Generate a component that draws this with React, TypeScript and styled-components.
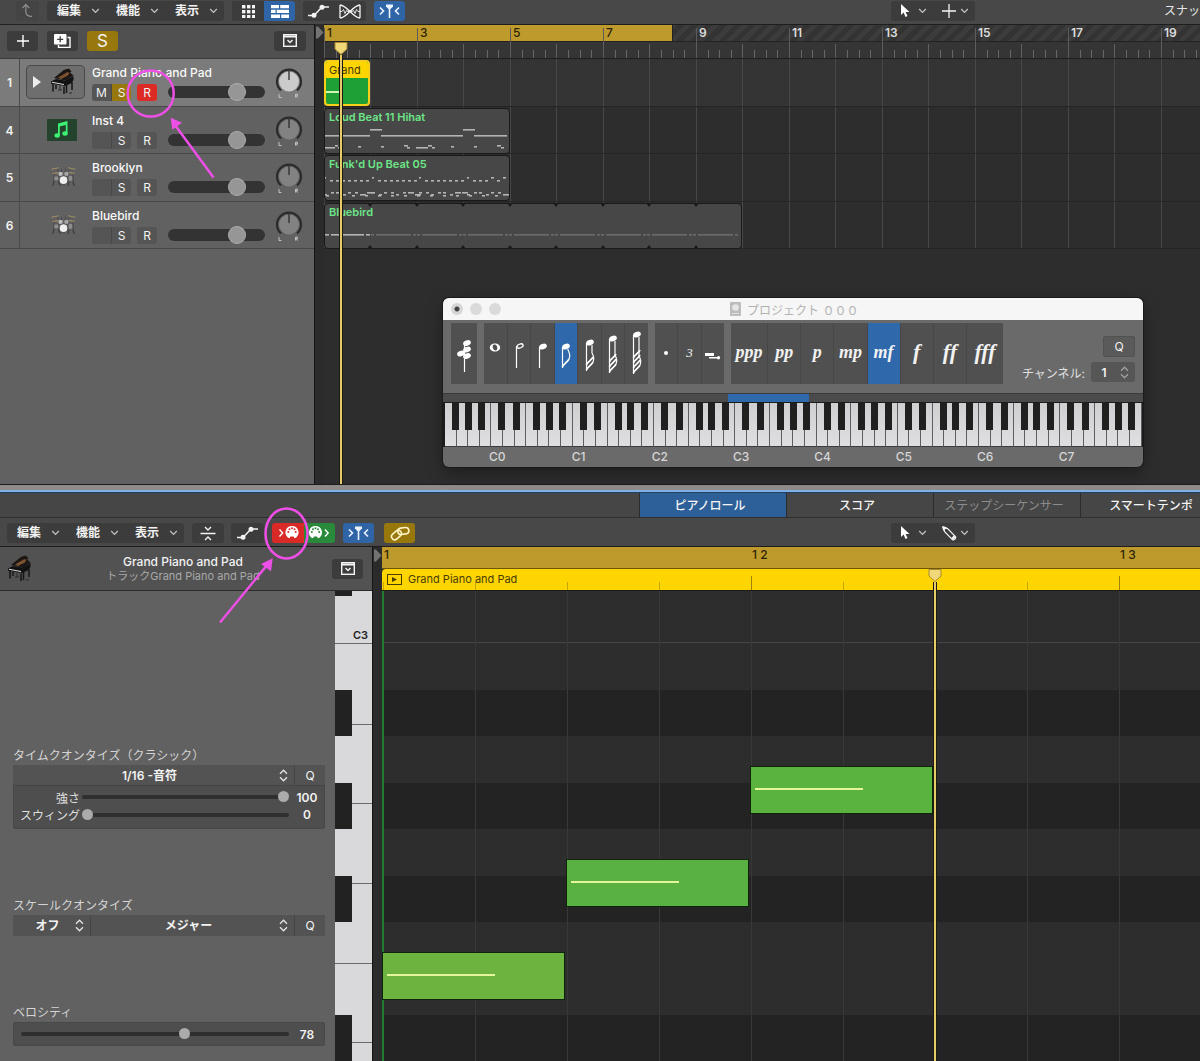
import React from "react";
import styled, { createGlobalStyle, css } from "styled-components";

const Global = createGlobalStyle`
  *, *::before, *::after { box-sizing: border-box; }
  html, body { margin: 0; padding: 0; background: #2d2d2d; }
  body, button, select, input {
    font-family: Inter, "Noto Sans CJK JP", sans-serif;
    font-size: 12px;
    color: #f2f2f2;
  }
  button, select { border: 0; padding: 0; margin: 0; background: none; }
  svg { display: block; flex: none; }
`;

/* ---------- shell ---------- */

const App = styled.div`
  position: relative;
  display: flex;
  flex-direction: column;
  min-height: 100vh;
  overflow: hidden;
`;

const Toolbar = styled.div<{ $lower?: boolean }>`
  display: flex;
  align-items: flex-start;
  height: ${(p) => (p.$lower ? 29 : 24)}px;
  padding: ${(p) => (p.$lower ? "5px 0 0 7px" : "1px 0 0 16px")};
  background: #484848;
  border-bottom: ${(p) => (p.$lower ? "1px solid #1c1c1c" : "0")};
  white-space: nowrap;
`;

const Group = styled.div<{ $gap?: number }>`
  display: flex;
  flex: none;
  margin-right: ${(p) => p.$gap ?? 8}px;
  border-radius: 3px;
  overflow: hidden;
  background: #3c3c3c;
`;

const Spacer = styled.div`
  flex: 1;
`;

const ToolEnd = styled.div`
  display: flex;
  justify-content: flex-end;
  flex: none;
  width: 225px;
  overflow: hidden;
  line-height: 20px;
  color: #e6e6e6;
`;

const tones = {
  plain: "#3c3c3c",
  blue: "#2f65a7",
  gold: "#98780c",
  red: "#d92a27",
  green: "#2a8a3c",
  faint: "#444444",
};

const ToolButton = styled.button<{ $w: number; $tone?: keyof typeof tones }>`
  display: flex;
  align-items: center;
  justify-content: center;
  flex: none;
  width: ${(p) => p.$w}px;
  height: 20px;
  background: ${(p) => tones[p.$tone ?? "plain"]};
  font-size: 17px;
`;

const MenuButton = styled.button`
  display: flex;
  align-items: center;
  justify-content: space-between;
  width: 59px;
  height: 20px;
  padding: 0 6px 0 10px;
  font-weight: 700;
  line-height: 20px;
`;

const ToolMenu = styled.button`
  display: flex;
  align-items: center;
  justify-content: space-between;
  width: 42px;
  height: 20px;
  padding: 0 6px 0 9px;
`;

/* ---------- arrangement ---------- */

const Arrange = styled.div`
  position: relative;
  display: flex;
  height: 460px;
`;

const TrackPane = styled.div`
  width: 315px;
  flex: none;
  background: #616161;
  border-right: 1px solid #151515;
`;

const TrackTools = styled.div`
  display: flex;
  align-items: center;
  height: 35px;
  padding: 0 8px 2px 7px;
  background: #505050;
  border-top: 1px solid #222;
  border-bottom: 1px solid #3c3c3c;
`;

const TrackRow = styled.div<{ $h: number; $on?: boolean }>`
  display: flex;
  height: ${(p) => p.$h}px;
  background: ${(p) => (p.$on ? "#7b7b7b" : "#616161")};
  border-bottom: 1px solid #484848;
`;

const TrackNo = styled.div`
  display: flex;
  align-items: center;
  justify-content: center;
  width: 20px;
  border-right: 1px solid #4c4c4c;
  font-weight: 600;
`;

const IconBox = styled.div<{ $on?: boolean }>`
  display: flex;
  align-items: center;
  justify-content: flex-end;
  width: 59px;
  height: 34px;
  margin: 6px 7px 0 6px;
  padding: 0 8px 0 7px;
  border-radius: 5px;
  ${(p) =>
    p.$on &&
    css`
      background: #6e6e6e;
      box-shadow: inset 0 0 0 1px #494949;
    `}
`;

const TrackMain = styled.div`
  width: 174px;
  padding-top: 5px;
`;

const TrackName = styled.div`
  height: 19px;
  line-height: 17px;
  font-size: 12px;
  font-weight: 500;
  color: #fafafa;
  white-space: nowrap;
`;

const Strip = styled.div`
  display: flex;
  align-items: center;
  height: 18px;
`;

const MiniButton = styled.button<{ $bg?: string; $pos?: "l" | "r" }>`
  width: ${(p) => (p.$pos === "r" ? 19 : 20)}px;
  height: 17px;
  background: ${(p) => p.$bg ?? "#555555"};
  border-radius: ${(p) => (p.$pos === "l" ? "3px 0 0 3px" : p.$pos === "r" ? "0 3px 3px 0" : "3px")};
  margin-right: ${(p) => (p.$pos === "l" ? 0 : p.$pos === "r" ? 6 : 11)}px;
  border-right: ${(p) => (p.$pos === "l" ? "1px solid #484848" : "0")};
  line-height: 17px;
`;

const Volume = styled.input`
  appearance: none;
  width: 97px;
  height: 18px;
  margin: 0;
  background: none;
  &::-webkit-slider-runnable-track {
    height: 12px;
    border-radius: 6px;
    background: #333;
  }
  &::-webkit-slider-thumb {
    appearance: none;
    width: 18px;
    height: 18px;
    margin-top: -3px;
    border-radius: 50%;
    background: #969696;
    border: 1px solid #acacac;
  }
`;

const KnobLabel = styled.label`
  position: relative;
  display: block;
  padding: 7px 0 0 8px;
  input {
    position: absolute;
    opacity: 0;
    width: 28px;
    height: 28px;
    margin: 0;
  }
`;

const TimePane = styled.div`
  flex: 1;
  min-width: 0;
  display: flex;
  overflow: hidden;
  background: #2d2d2d;
`;

const Gutter = styled.div<{ $w: number }>`
  width: ${(p) => p.$w}px;
  flex: none;
  padding: 2px 0 0 1px;
  background: #2b2b2b;
`;

const Timeline = styled.div`
  position: relative;
  flex: 1;
  min-width: 0;
  overflow: hidden;
`;

const Ruler = styled.div`
  display: grid;
  height: 35px;
  border-top: 1px solid #1e1e1e;
  border-bottom: 1px solid #1e1e1e;
  background: #353535;
  overflow: hidden;
`;

const CycleLane = styled.div`
  grid-area: 1 / 1;
  height: 17px;
  border-bottom: 1px solid #222;
  background: repeating-linear-gradient(135deg, #333 0 5px, #3c3c3c 5px 10px);
`;

const Cycle = styled.div`
  width: 349px;
  height: 16px;
  background: #be9a2c;
  border-right: 1px solid #222;
`;

const Bars = styled.div`
  grid-area: 1 / 1;
  display: flex;
`;

const tick = (x: number, h: number, c: string) =>
  `linear-gradient(${c}, ${c}) ${x}px 100% / 1px ${h}px no-repeat`;

const BarCell = styled.div<{ $dark: boolean }>`
  flex: none;
  width: 93px;
  height: 33px;
  padding-left: 3px;
  line-height: 15px;
  font-weight: ${(p) => (p.$dark ? 500 : 600)};
  color: ${(p) => (p.$dark ? "#2c2406" : "#dcdcdc")};
  background: ${[12, 23, 35, 58, 70, 81].map((x) => tick(x, 8, "#666")).join(",")},
    ${tick(46, 14, "#606060")}, ${tick(0, 30, "#5c5c5c")};
`;

const Lane = styled.div<{ $h: number; $on?: boolean }>`
  height: ${(p) => p.$h}px;
  padding-top: 1px;
  border-bottom: 1px solid #252525;
  background: linear-gradient(90deg, #484848 1px, transparent 1px 46px, #484848 46px 47px, transparent 47px) 0 0 / 93px
      100%,
    ${(p) => (p.$on ? "#343434" : "#2d2d2d")};
`;

const Region = styled.div<{ $w: number; $sel?: boolean }>`
  position: relative;
  width: ${(p) => p.$w}px;
  height: 46px;
  border-radius: 4px;
  overflow: hidden;
  background: ${(p) => (p.$sel ? "#1fa035" : "#474747")};
  border: ${(p) => (p.$sel ? "2px solid #f5cf1a" : "1px solid #1a1a1a")};
`;

const RegionName = styled.div<{ $sel?: boolean }>`
  height: 16px;
  padding-left: ${(p) => (p.$sel ? 3 : 4)}px;
  line-height: 16px;
  font-size: 11px;
  font-weight: ${(p) => (p.$sel ? 400 : 600)};
  color: ${(p) => (p.$sel ? "#4a3d00" : "#6de688")};
  background: ${(p) => (p.$sel ? "#ffd500" : "none")};
  white-space: nowrap;
`;

const Playhead = styled.div<{ $x: number; $top: number }>`
  position: absolute;
  left: ${(p) => p.$x}px;
  top: ${(p) => p.$top}px;
  bottom: 0;
  width: 14px;
  display: flex;
  flex-direction: column;
  align-items: center;
  &::after {
    content: "";
    flex: 1;
    width: 4px;
    background: #e6cb6a;
    border: solid #1c1a12;
    border-width: 0 1px;
  }
`;

/* ---------- step input window ---------- */

const Floating = styled.section`
  position: absolute;
  left: 443px;
  top: 274px;
  width: 700px;
  border-radius: 6px;
  overflow: hidden;
  background: #6a6a6a;
  box-shadow: 0 0 0 1px #1a1a1a, 0 6px 16px rgba(0, 0, 0, 0.35);
`;

const TitleBar = styled.header`
  display: flex;
  align-items: center;
  height: 22px;
  padding-left: 8px;
  background: #f6f6f6;
`;

const Light = styled.button<{ $dot?: boolean }>`
  width: 12px;
  height: 12px;
  margin-right: 7px;
  border-radius: 50%;
  background: ${(p) => (p.$dot ? "radial-gradient(#444 2px, #d6d6d6 3px)" : "#dadada")};
`;

const Title = styled.h2`
  display: flex;
  align-items: center;
  gap: 6px;
  margin: 0 0 0 222px;
  font-size: 12px;
  font-weight: 400;
  color: #b2b2b2;
`;

const StepBody = styled.div`
  display: flex;
  height: 74px;
  padding: 3px 8px 0 8px;
  border-bottom: 1px solid #3a3a3a;
`;

const Cells = styled.div<{ $w: number }>`
  display: flex;
  flex: none;
  width: ${(p) => p.$w}px;
  height: 61px;
  margin-right: 7px;
  background: #505050;
`;

const Cell = styled.button<{ $on?: boolean; $grow?: number }>`
  flex: ${(p) => p.$grow ?? 1} 1 0;
  min-width: 0;
  display: flex;
  justify-content: center;
  align-items: center;
  border-right: 1px solid #474747;
  background: ${(p) => (p.$on ? "#2f68ab" : "none")};
  &:last-child {
    border-right: 0;
  }
`;

const Dynamic = styled.span<{ $big?: boolean }>`
  font-family: "Liberation Serif", serif;
  font-style: italic;
  font-weight: 700;
  font-size: ${(p) => (p.$big ? 22 : 18)}px;
  line-height: 24px;
  padding-bottom: 3px;
`;

const Triplet = styled.span`
  font-family: "Liberation Serif", serif;
  font-style: italic;
  font-size: 13px;
  padding-bottom: 2px;
`;

const StepSide = styled.div`
  flex: 1;
  display: flex;
  flex-direction: column;
  align-items: flex-end;
  gap: 5px;
  padding-top: 13px;
`;

const SmallButton = styled.button`
  width: 32px;
  height: 21px;
  border-radius: 3px;
  background: #5a5a5a;
  box-shadow: inset 0 0 0 1px #525252;
`;

const ChannelField = styled.div`
  display: flex;
  align-items: center;
  gap: 6px;
  color: #e0e0e0;
  white-space: nowrap;
`;

const SelectBox = styled.span<{ $w?: number; $filled?: boolean }>`
  display: grid;
  align-items: center;
  flex: ${(p) => (p.$w ? "none" : "1")};
  width: ${(p) => (p.$w ? `${p.$w}px` : "auto")};
  height: 20px;
  border-radius: 3px;
  background: ${(p) => (p.$filled ? "#565656" : "none")};
  select {
    grid-area: 1 / 1;
    appearance: none;
    width: 100%;
    height: 100%;
    padding: 0 ${(p) => (p.$filled ? 18 : 8)}px 0 0;
    text-align: center;
    text-align-last: center;
    font-weight: 600;
  }
  svg {
    grid-area: 1 / 1;
    justify-self: end;
    margin-right: 6px;
    pointer-events: none;
  }
`;

const KeyRange = styled.div`
  display: flex;
  height: 9px;
  padding: 0 2px;
  background: #4b4b4b;
  border-bottom: 1px solid #1c1c1c;
`;

const RangePart = styled.div<{ $grow: number; $on?: boolean }>`
  flex: ${(p) => p.$grow};
  background: ${(p) => (p.$on ? "#2f68ab" : "none")};
`;

const Keyboard = styled.div`
  display: flex;
  height: 44px;
  padding: 0 1px 0 2px;
  background: #1c1c1c;
`;

const WhiteKey = styled.div<{ $black?: number }>`
  position: relative;
  flex: 1;
  background: linear-gradient(#cfcfd1, #dfdfe1);
  border-right: 1px solid #5e5e60;
  border-bottom: 1px solid #3a3a3a;
  ${(p) =>
    p.$black &&
    css`
      &::after {
        content: "";
        position: absolute;
        z-index: 1;
        left: ${p.$black}px;
        top: 0;
        width: 7px;
        height: 27px;
        background: #202020;
      }
    `}
`;

const OctaveRow = styled.div`
  display: flex;
  height: 20px;
  padding: 0 1px 0 2px;
  line-height: 20px;
  text-align: center;
  color: #d6d6d6;
  font-weight: 500;
`;

/* ---------- editor ---------- */

const Divider = styled.div`
  height: 8px;
  background: #8f8b8a;
  border-top: 1px solid #1c1c1c;
  border-bottom: 2px solid #7fb1e6;
`;

const Tabs = styled.div`
  display: flex;
  height: 26px;
  margin-right: -27px;
  background: #464646;
  border-top: 1px solid #23415f;
  border-bottom: 1px solid #303030;
`;

const Tab = styled.button<{ $on?: boolean; $off?: boolean }>`
  width: 147px;
  padding: 0 6px 2px 0;
  border-left: 1px solid #2c2c2c;
  background: ${(p) => (p.$on ? "#2d5f98" : "none")};
  color: ${(p) => (p.$off ? "#8c8c8c" : "#f4f4f4")};
  font-weight: ${(p) => (p.$off ? 400 : 500)};
`;

const Editor = styled.div`
  flex: 1;
  display: flex;
  min-height: 514px;
`;

const EditorLeft = styled.div`
  width: 373px;
  flex: none;
  display: flex;
  flex-direction: column;
  border-right: 1px solid #151515;
`;

const EditorHeader = styled.div`
  display: flex;
  align-items: center;
  height: 44px;
  padding: 0 9px 0 6px;
  background: #525252;
  border-bottom: 1px solid #2a2a2a;
`;

const EditorTitle = styled.div`
  flex: 1;
  text-align: center;
  line-height: 14px;
  font-size: 12px;
  font-weight: 500;
  white-space: nowrap;
  small {
    display: block;
    font-size: 11px;
    font-weight: 400;
    color: #a8a8a8;
  }
`;

const EditorSplit = styled.div`
  flex: 1;
  display: flex;
`;

const Inspector = styled.div`
  flex: 1;
  display: flex;
  flex-direction: column;
  gap: 69px;
  padding: 157px 10px 0 13px;
  background: #616161;
`;

const Section = styled.section`
  display: flex;
  flex-direction: column;
`;

const SectionTitle = styled.h3`
  margin: 0 0 1px;
  font-size: 12px;
  line-height: 16px;
  font-weight: 400;
  color: #d4d4d4;
`;

const Panel = styled.div`
  border-radius: 3px;
  background: #4e4e4e;
  box-shadow: inset 0 0 0 1px #484848;
`;

const PanelRow = styled.div<{ $line?: boolean }>`
  display: flex;
  height: 21px;
  background: #535353;
  border-radius: 3px;
  border-bottom: ${(p) => (p.$line ? "1px solid #454545" : "0")};
`;

const QButton = styled.button`
  width: 31px;
  border-left: 1px solid #454545;
`;

const Sep = styled.span`
  width: 1px;
  background: #454545;
`;

const SliderStack = styled.div`
  padding: 2px 0 6px;
`;

const SliderRow = styled.label<{ $h: number }>`
  display: flex;
  align-items: center;
  height: ${(p) => p.$h}px;
`;

const SliderName = styled.span`
  width: 67px;
  text-align: right;
  color: #dedede;
  white-space: nowrap;
`;

const Slider = styled.input<{ $lead?: number }>`
  appearance: none;
  flex: 1;
  min-width: 0;
  height: 12px;
  margin: 0 0 0 ${(p) => p.$lead ?? 2}px;
  background: none;
  &::-webkit-slider-runnable-track {
    height: 4px;
    border-radius: 2px;
    background: #2f2f2f;
  }
  &::-webkit-slider-thumb {
    appearance: none;
    width: 11px;
    height: 11px;
    margin-top: -4px;
    border-radius: 50%;
    background: #ababab;
  }
`;

const Value = styled.output`
  width: 36px;
  text-align: center;
  font-weight: 600;
`;

const Keys = styled.div`
  display: grid;
  width: 37px;
  flex: none;
  background: #d9d9db;
`;

const KeyCol = styled.div<{ $narrow?: boolean }>`
  grid-area: 1 / 1;
  width: ${(p) => (p.$narrow ? "17px" : "auto")};
  display: flex;
  flex-direction: column;
`;

const VWhite = styled.div<{ $h: number }>`
  height: ${(p) => p.$h}px;
  display: flex;
  align-items: flex-end;
  justify-content: flex-end;
  padding-right: 4px;
  border-bottom: 1px solid #6a6a6c;
  font-size: 11px;
  line-height: 15px;
  font-weight: 600;
  color: #222;
`;

const VBlack = styled.div<{ $h: number; $fill: boolean }>`
  height: ${(p) => p.$h}px;
  background: ${(p) => (p.$fill ? "#222" : "none")};
`;

const Roll = styled.div`
  position: relative;
  flex: 1;
  min-width: 0;
  display: flex;
  flex-direction: column;
  overflow: hidden;
`;

const BeatRuler = styled.div`
  display: flex;
  height: 22px;
  background: #be9a2c;
  border-bottom: 1px solid #6f5708;
`;

const BeatCell = styled.div`
  flex: none;
  width: 368px;
  padding-left: 2px;
  line-height: 16px;
  font-weight: 500;
  white-space: pre;
  color: #2c2406;
`;

const RegionBar = styled.div`
  display: flex;
  align-items: center;
  gap: 6px;
  height: 22px;
  padding: 0 0 1px 5px;
  font-size: 11px;
  color: #4a3d00;
  border-bottom: 1px solid #1c1c1c;
  border-radius: 4px 0 0 0;
  background: linear-gradient(#a08208, #a08208) 369px 100% / 1px 14px no-repeat,
    linear-gradient(#a08208, #a08208) 737px 100% / 1px 14px no-repeat,
    linear-gradient(90deg, transparent 1px, #c8a600 1px 2px, transparent 2px) 0 100% / 92px 8px repeat-x, #ffd500;
`;

const NoteGrid = styled.div`
  position: relative;
  flex: 1;
  display: flex;
  flex-direction: column;
  border-left: 2px solid #1f7d2d;
  &::before {
    content: "";
    position: absolute;
    inset: 0;
    background: linear-gradient(90deg, #383838 1px, transparent 1px) -1px 0 / 92px 100%;
  }
`;

const PitchRow = styled.div<{ $h: number; $kind: string }>`
  flex: ${(p) => (p.$kind === "end" ? "1" : "none")};
  height: ${(p) => p.$h}px;
  background: ${(p) => (p.$kind === "w" || p.$kind === "c" ? "#2d2d2d" : "#232323")};
  border-bottom: ${(p) => (p.$kind === "c" ? "1px solid #444" : "0")};
`;

const Note = styled.div<{ $x: number; $y: number; $c: string }>`
  position: absolute;
  left: ${(p) => p.$x}px;
  top: ${(p) => p.$y}px;
  width: 183px;
  height: 48px;
  padding: 21px 0 0 4px;
  background: ${(p) => p.$c};
  border: 1px solid #10240c;
  &::after {
    content: "";
    display: block;
    width: 108px;
    height: 2px;
    background: #e4f59b;
  }
`;

const Annotations = styled.svg`
  position: absolute;
  left: 0;
  top: 0;
  pointer-events: none;
`;

/* ---------- drawings ---------- */

const Chevron = () => (
  <svg width="9" height="6" viewBox="0 0 9 6" fill="none" stroke="#c4c4c4" strokeWidth="1.2">
    <path d="M1.2 1 4.5 4.4 7.8 1" />
  </svg>
);

const UpDown = ({ dim }: { dim?: boolean }) => (
  <svg width="9" height="13" viewBox="0 0 9 13" fill="none" stroke={dim ? "#a0a0a0" : "#e4e4e4"} strokeWidth="1.3">
    <path d="M1 4.8 4.5 1.2 8 4.8M1 8.2l3.5 3.6L8 8.2" />
  </svg>
);

const BackIcon = () => (
  <svg width="14" height="16" viewBox="0 0 14 16" fill="none" stroke="#8a8a8a" strokeWidth="1.3">
    <path d="M1.5 5 4.8 1.500 8.200 5M4.800 1.500v7c0 3.500 2 5 6.200 5" />
  </svg>
);

const GridIcon = () => (
  <svg width="13" height="13" viewBox="0 0 13 13" fill="#f4f4f4">
    {[0, 5, 10].map((y) => [0, 5, 10].map((x) => <rect key={`${x}-${y}`} x={x} y={y} width="3.4" height="3.4" />))}
  </svg>
);

const ListIcon = () => (
  <svg width="18" height="13" viewBox="0 0 18 13" fill="#fff">
    <path d="M0 0h8v3.200H0zM9.200 0H18v3.200H9.200zM0 4.800h4.500V8H0zM5.700 4.800H18V8H5.700zM0 9.600h9V13H0zM10.200 9.600H18V13h-7.800z" />
  </svg>
);

const AutomationIcon = () => (
  <svg width="22" height="14" viewBox="0 0 22 14" fill="none" stroke="#f4f4f4" strokeWidth="1.400">
    <path d="M0 11.500h6L14 3h7" />
    <circle cx="6" cy="11.200" r="1.800" fill="#f4f4f4" />
    <circle cx="14" cy="3.200" r="1.800" fill="#f4f4f4" />
  </svg>
);

const FlexIcon = () => (
  <svg width="22" height="15" viewBox="0 0 22 15" fill="none" stroke="#f4f4f4" strokeWidth="1.300">
    <path d="M1 1v13M21 1v13M1 1c3 0 5 1.500 10 6.500s7 6.500 10 6.500M1 14c3 0 5-1.500 10-6.500S18 1 21 1" />
    <path d="M1 7.500h2l1.500-2 1.500 4 1.500-3 1.500 1h4l1.500-1 1.500 3 1.500-4 1.500 2h2" strokeWidth=".9" />
  </svg>
);

const CatchIcon = () => (
  <svg width="21" height="14" viewBox="0 0 21 14" fill="none" stroke="#eaf2ff" strokeWidth="1.600">
    <path d="M1 3.500 4.500 7 1 10.500M20 3.500 16.500 7l3.500 3.500M10.500 2v12" />
    <path d="M7 .5h7v2L11.500 5h-2L7 2.500z" fill="#eaf2ff" stroke="none" />
  </svg>
);

const PointerIcon = () => (
  <svg width="11" height="14" viewBox="0 0 11 14">
    <path d="M1 0v11l2.600-2.400L5.500 13l2-.9-1.900-4.200H9.500z" fill="#fff" />
  </svg>
);

const CrossIcon = () => (
  <svg width="14" height="14" viewBox="0 0 14 14" stroke="#f4f4f4" strokeWidth="1.300">
    <path d="M7 0v14M0 7h14" />
  </svg>
);

const PencilIcon = () => (
  <svg width="15" height="15" viewBox="0 0 15 15" fill="none" stroke="#f4f4f4" strokeWidth="1.300" strokeLinejoin="round">
    <path d="M1.200 1.200 5.600 2.600l7.600 7.800c1.400 1.600-1.400 4.400-3 3L2.600 5.600z" />
    <path d="M.8.800l3 .9L1.700 3.800z" fill="#f4f4f4" />
    <path d="M10.200 12.800 12.800 10.200" strokeWidth="2.400" />
  </svg>
);

const LinkIcon = () => (
  <svg width="20" height="15" viewBox="0 0 20 15" fill="none" stroke="#fff3c4" strokeWidth="1.600">
    <rect x="-5.500" y="-3.200" width="11" height="6.400" rx="3.200" transform="translate(6.500 9) rotate(-42)" />
    <rect x="-5.500" y="-3.200" width="11" height="6.400" rx="3.200" transform="translate(13.300 5) rotate(-8)" />
  </svg>
);

const CollapseIcon = () => (
  <svg width="16" height="15" viewBox="0 0 16 15" fill="none" stroke="#f4f4f4" strokeWidth="1.400">
    <path d="M.5 7.500h15M5 1l3 3 3-3M5 14l3-3 3 3" />
  </svg>
);

const MidiIcon = ({ out }: { out?: boolean }) => (
  <svg width="21" height="14" viewBox="0 0 21 14" fill="none">
    <g transform={out ? "translate(0 0)" : "translate(7.500 0)"}>
      <path d="M6.500 0a6.500 6.500 0 0 0-4.300 11.400l1.800.9 1-1.800h3l1 1.800 1.800-.9A6.500 6.500 0 0 0 6.500 0z" fill="#fff" />
      <g fill={out ? "#2a8a3c" : "#d92a27"}>
        <circle cx="2.800" cy="6" r="1" />
        <circle cx="4" cy="3.300" r="1" />
        <circle cx="6.500" cy="2.300" r="1" />
        <circle cx="9" cy="3.300" r="1" />
        <circle cx="10.200" cy="6" r="1" />
      </g>
    </g>
    <path d={out ? "M16 3.500 19.200 7 16 10.500" : "M1.500 3.500 4.700 7 1.500 10.500"} stroke="#fff" strokeWidth="1.400" />
  </svg>
);

const PlusIcon = () => (
  <svg width="12" height="12" viewBox="0 0 12 12" stroke="#fff" strokeWidth="1.400">
    <path d="M6 0v12M0 6h12" />
  </svg>
);

const DuplicateIcon = () => (
  <svg width="17" height="14" viewBox="0 0 17 14" fill="none">
    <path d="M13.500 3.500H16v10H4.500V11" stroke="#fff" strokeWidth="1.400" />
    <rect x="0" y="0" width="12.500" height="10.500" rx="1" fill="#fff" />
    <path d="M6.200 2.300v6M3.200 5.300h6" stroke="#3c3c3c" strokeWidth="1.300" />
  </svg>
);

const PanelIcon = () => (
  <svg width="14" height="13" viewBox="0 0 14 13" fill="none" stroke="#f4f4f4" strokeWidth="1.400">
    <rect x=".7" y=".7" width="12.600" height="11.600" />
    <path d="M1 2.500h12" strokeWidth="2" />
    <path d="M4.500 6 7 8.600 9.500 6" />
  </svg>
);

const PianoIcon = ({ size = 28 }: { size?: number }) => (
  <svg width={size} height={size} viewBox="0 0 28 28">
    <path d="M5 10 13 3.500C15 1.500 18 .6 20 .8L22.500 3.500l-1.500 1 3.500 3-8 5z" fill="#1b1513" />
    <path d="M9 9.500 18 4.200l2.500.3-1.500 3-7 3.500z" fill="#7a5230" />
    <path d="M2 13.500l5-2.500 9 1.500 8.500-4.500v4l-2 3-6 3-14.500-2.300z" fill="#121212" />
    <path d="M3 14.300l12 2.200" stroke="#d6d6d6" strokeWidth="1.100" />
    <path d="M4 16v7.500M7 17v4M15 18.500V26M17.500 17v8M23 14v8" stroke="#161616" strokeWidth="1.500" />
    <path d="M9 22h4M11 17v5M20 25h3" stroke="#2c2c2c" />
  </svg>
);

const NoteTile = () => (
  <svg width="30" height="22" viewBox="0 0 30 22">
    <rect width="30" height="22" rx="1" fill="#24432d" />
    <g fill="#3df272">
      <path d="M11 4.500 20.500 2v3.500L12.800 7.500v9h-1.800zM18.800 3h1.700v11.500h-1.700z" />
      <ellipse cx="10.200" cy="16.500" rx="2.700" ry="2.200" />
      <ellipse cx="18" cy="14.500" rx="2.700" ry="2.200" />
    </g>
  </svg>
);

const DrumIcon = () => (
  <svg width="27" height="22" viewBox="0 0 28 24" fill="none">
    <path d="M4 6 3 21M8 3l1 18M20 3l-1 18M24 6l1 15M12 3v8M16 3v8" stroke="#3f3f3f" strokeWidth=".8" />
    <path d="M1 3.500l8-1.500M19 2l8 1.500M2 8l6-.8M20 7l6 1" stroke="#a08c66" strokeWidth="1.200" />
    <rect x="8.500" y="6.500" width="4.500" height="4" rx="1" fill="#bdbdbd" />
    <rect x="15" y="6.500" width="4.500" height="4" rx="1" fill="#a5a5a5" />
    <rect x="4" y="11.500" width="4.500" height="4" rx="1" fill="#8e8e8e" />
    <rect x="19.500" y="11" width="4" height="5" rx="1" fill="#8e8e8e" />
    <path d="M4 17 2 22M9 17l2 5M20 17l-1 5M24 17l2 5" stroke="#333" strokeWidth=".8" />
    <circle cx="14" cy="15.500" r="4.800" fill="#3a3a3a" />
    <circle cx="14" cy="15.500" r="4.200" fill="#efefef" />
  </svg>
);

const PlayTriangle = () => (
  <svg width="8" height="12" viewBox="0 0 8 12">
    <path d="M0 0 8 6 0 12z" fill="#ececec" />
  </svg>
);

const StartTriangle = () => (
  <svg width="8" height="13" viewBox="0 0 8 13">
    <path d="M0 .5h2L7.500 6.500 2 12.500H0z" fill="#727272" />
  </svg>
);

const PlayheadCap = () => (
  <svg width="14" height="13" viewBox="0 0 14 13">
    <path d="M1 .5h12V7L7 12.500 1 7z" fill="#f0d878" stroke="#a8882c" />
  </svg>
);

const RegionGlyph = () => (
  <svg width="15" height="11" viewBox="0 0 15 11">
    <rect x=".5" y=".5" width="14" height="10" fill="none" stroke="#4a3d00" />
    <path d="M5 3v5l5-2.500z" fill="#4a3d00" />
  </svg>
);

const DocIcon = () => (
  <svg width="11" height="14" viewBox="0 0 11 14">
    <rect width="11" height="14" rx="1" fill="#bdbdbd" />
    <circle cx="5.500" cy="5.500" r="3.300" fill="#e6e6e6" />
    <path d="M2 11.500h7" stroke="#dcdcdc" />
  </svg>
);

const Knob = ({ on, label }: { on?: boolean; label: string }) => (
  <KnobLabel>
    <input type="range" min="-64" max="63" defaultValue="0" aria-label={label} />
    <svg width="30" height="36" viewBox="0 0 30 36">
      <path d="M7 24.500A12 12 0 1 1 23 24.500" fill="none" stroke="#2b2b2b" strokeWidth="2.200" />
      <circle cx="15" cy="15.500" r="10" fill={on ? "#cbcbcb" : "#828282"} />
      <path d="M15 5v9" stroke="#2b2b2b" strokeWidth="1.300" />
      <path d="M5 28v3.500h2.500M21.500 31.500V28.200h2v1.600h-2l2.200 1.700" fill="none" stroke="#c2c2c2" />
    </svg>
  </KnobLabel>
);

const Head = ({ x, y, hollow }: { x: number; y: number; hollow?: boolean }) => (
  <ellipse
    cx="0"
    cy="0"
    rx={hollow ? 3.2 : 4}
    ry={hollow ? 1.9 : 2.7}
    transform={`translate(${x} ${y}) rotate(-22)`}
    fill={hollow ? "none" : "#fff"}
    stroke={hollow ? "#fff" : "none"}
    strokeWidth="1.300"
  />
);

const NoteGlyph = ({ kind }: { kind: string }) => {
  const flags: Record<string, [number, number, number]> = {
    n8: [24, 45, 1],
    n16: [20, 48, 2],
    n32: [16, 50, 3],
    n64: [12, 51, 4],
  };
  const f = flags[kind];
  return (
    <svg width="22" height="61" viewBox="0 0 22 61" fill="none" stroke="#fff" strokeWidth="1.200">
      {kind === "chord" && (
        <>
          <path d="M11.500 19v30" />
          <Head x={14} y={20} />
          <Head x={14} y={26.5} />
          <Head x={14} y={33} />
          <Head x={8} y={30.5} />
        </>
      )}
      {kind === "n1" && (
        <path
          d="M11 20.500c-3 0-5.200 1.800-5.200 4s2.200 4 5.200 4 5.200-1.800 5.200-4-2.200-4-5.200-4zm-.6 1c1.500-.2 2.800 1.500 2.900 3.200s-.6 2.700-1.700 2.800-2.700-1.400-2.900-3.200.5-2.700 1.700-2.800z"
          fill="#fff"
          fillRule="evenodd"
          stroke="none"
        />
      )}
      {kind === "n2" && (
        <>
          <path d="M8.500 23v22" />
          <Head x={12} y={23} hollow />
        </>
      )}
      {kind === "n4" && (
        <>
          <path d="M8.500 24v21" />
          <Head x={12} y={23.5} />
        </>
      )}
      {f && (
        <>
          <path d={`M7.500 ${f[0]}V${f[1]}`} />
          <Head x={11} y={f[0] - 0.5} />
          {Array.from({ length: f[2] }, (_, i) => (
            <path key={i} d={`M7.500 ${f[1] - 1 - i * 5}c1-3.500 5-4.500 6.500-8`} strokeWidth="1.800" />
          ))}
          <path d={`M14 ${f[1] - 9}c1.200-3 .8-6-1-9V${f[0] + 2}`} />
        </>
      )}
      {kind === "dot" && <circle cx="11" cy="30" r="2" fill="#fff" stroke="none" />}
      {kind === "tie" && (
        <g fill="#fff" stroke="none">
          <rect x="3" y="30" width="9" height="3" />
          <rect x="7" y="34" width="9" height="1.500" />
          <circle cx="16.500" cy="34.700" r="1.700" />
        </g>
      )}
    </svg>
  );
};

type Dash = [number, number, number];

const RegionMidi = styled.svg`
  position: absolute;
  left: -1px;
  top: -1px;
`;

const Dashes = ({ w, items, dim }: { w: number; items: Dash[]; dim?: Dash[] }) => (
  <RegionMidi width={w} height="46" viewBox={`0 0 ${w} 46`}>
    {items.map(([x, y, l], i) => (
      <rect key={i} x={x} y={y} width={l} height="1.600" fill="#b4b4b4" />
    ))}
    {dim?.map(([x, y, l], i) => (
      <rect key={i} x={x} y={y} width={l} height="1.600" fill="#6c6c6c" />
    ))}
    {dim &&
      [46, 93, 139, 186, 232, 279, 325, 372].map((x) => (
        <path key={x} d={`M${x - 3} 0h6l-3 4zM${x - 3} 46h6l-3-4z`} fill="#1a1a1a" />
      ))}
  </RegionMidi>
);

const hihat: Dash[] = [
  [0, 27, 46], [46, 21, 12], [57, 27, 82], [139, 21, 12], [150, 27, 33],
  [0, 39, 11], [11, 37, 3], [14, 39, 3], [34, 38, 3], [57, 38, 3], [80, 37, 4], [83, 39, 3],
  [92, 39, 12], [104, 37, 4], [108, 39, 3], [127, 38, 3], [150, 38, 3], [173, 37, 4], [177, 39, 3],
];

const funk: Dash[] = [
  ...Array.from({ length: 32 }, (_, i): Dash => [i * 6 - (i > 15 ? 1 : 0), [0, 8, 16, 24, 28, 30].includes(i) ? 22 : 25, i % 8 === 0 ? 2 : 3]),
  ...Array.from({ length: 32 }, (_, i): Dash => [i * 6 - (i > 15 ? 1 : 0) + (i % 2), i % 3 ? 37 : 39, i % 8 > 5 ? 6 : 3]),
  ...Array.from({ length: 14 }, (_, i): Dash => [i * 13 + 2, 40, 3]),
];

const blueLead: Dash[] = [[0, 31, 5], [7, 31, 33], [42, 31, 4]];
const blueTail: Dash[] = Array.from({ length: 8 }, (_, i): Dash[] => [
  [47 + i * 46, 31, 3],
  [52 + i * 46, 31, 35],
  [89 + i * 46, 31, 3],
]).flat();

/* ---------- data ---------- */

const tracks = [
  { no: 1, name: "Grand Piano and Pad", h: 48, icon: "piano", on: true },
  { no: 4, name: "Inst 4", h: 47, icon: "note" },
  { no: 5, name: "Brooklyn", h: 48, icon: "drum" },
  { no: 6, name: "Bluebird", h: 47, icon: "drum" },
];

const blackOffset: Record<string, number> = { C: 7, D: 10, F: 7, G: 8, A: 10 };
const whiteKeys = [..."FGAB", ..."CDEFGAB".repeat(8)];

const pitchRows: [number, string][] = [
  [52, "c"], [47, "w"], [46, "b"], [47, "w"], [46, "b"], [47, "w"], [46, "b"], [93, "w"], [46, "end"],
];

const Menus = () => (
  <>
    {["編集", "機能", "表示"].map((m) => (
      <MenuButton key={m}>
        {m}
        <Chevron />
      </MenuButton>
    ))}
  </>
);

export default function LogicWindow() {
  return (
    <>
      <Global />
      <App>
        <Toolbar>
          <Group>
            <ToolButton $w={23} $tone="faint" aria-label="戻る"><BackIcon /></ToolButton>
          </Group>
          <Group><Menus /></Group>
          <Group>
            <ToolButton $w={32} aria-label="グリッド"><GridIcon /></ToolButton>
            <ToolButton $w={31} $tone="blue" aria-label="トラック"><ListIcon /></ToolButton>
          </Group>
          <Group>
            <ToolButton $w={31} aria-label="オートメーション"><AutomationIcon /></ToolButton>
            <ToolButton $w={32} aria-label="フレックス"><FlexIcon /></ToolButton>
          </Group>
          <Group>
            <ToolButton $w={31} $tone="blue" aria-label="キャッチ"><CatchIcon /></ToolButton>
          </Group>
          <Spacer />
          <Group $gap={0}>
            <ToolMenu aria-label="ポインタツール"><PointerIcon /><Chevron /></ToolMenu>
            <ToolMenu aria-label="マーキーツール"><CrossIcon /><Chevron /></ToolMenu>
          </Group>
          <ToolEnd>スナッ</ToolEnd>
        </Toolbar>

        <Arrange>
          <TrackPane>
            <TrackTools>
              <Group $gap={9}><ToolButton $w={31} aria-label="トラックを追加"><PlusIcon /></ToolButton></Group>
              <Group $gap={9}><ToolButton $w={31} aria-label="トラックを複製"><DuplicateIcon /></ToolButton></Group>
              <Group><ToolButton $w={31} $tone="gold">S</ToolButton></Group>
              <Spacer />
              <Group $gap={0}><ToolButton $w={32} aria-label="設定"><PanelIcon /></ToolButton></Group>
            </TrackTools>
            {tracks.map((t) => (
              <TrackRow key={t.no} $h={t.h} $on={t.on}>
                <TrackNo>{t.no}</TrackNo>
                <IconBox $on={t.on}>
                  {t.on && <><PlayTriangle /><Spacer /></>}
                  {t.icon === "piano" && <PianoIcon />}
                  {t.icon === "note" && <NoteTile />}
                  {t.icon === "drum" && <DrumIcon />}
                </IconBox>
                <TrackMain>
                  <TrackName>{t.name}</TrackName>
                  <Strip>
                    <MiniButton $pos="l" aria-label="ミュート">{t.on ? "M" : ""}</MiniButton>
                    <MiniButton $pos="r" $bg={t.on ? "#98780c" : undefined}>S</MiniButton>
                    <MiniButton $bg={t.on ? "#dc2a24" : undefined}>R</MiniButton>
                    <Volume type="range" min="0" max="100" defaultValue="76" aria-label={`${t.name} 音量`} />
                  </Strip>
                </TrackMain>
                <Knob on={t.on} label={`${t.name} パン`} />
              </TrackRow>
            ))}
          </TrackPane>
          <TimePane>
            <Gutter $w={9}><StartTriangle /></Gutter>
            <Timeline>
              <Ruler>
                <CycleLane><Cycle /></CycleLane>
                <Bars>
                  {Array.from({ length: 24 }, (_, i) => (
                    <BarCell key={i} $dark={i < 4}>{i < 10 ? i * 2 + 1 : ""}</BarCell>
                  ))}
                </Bars>
              </Ruler>
              <Lane $h={48} $on>
                <Region $w={46} $sel>
                  <RegionName $sel>Grand</RegionName>
                  <RegionMidi width="46" height="45"><rect x="1" y="30" width="16" height="2" fill="#c8f7b8" /></RegionMidi>
                </Region>
              </Lane>
              <Lane $h={47}>
                <Region $w={186}><RegionName>Loud Beat 11 Hihat</RegionName><Dashes w={186} items={hihat} /></Region>
              </Lane>
              <Lane $h={48}>
                <Region $w={186}><RegionName>Funk'd Up Beat 05</RegionName><Dashes w={186} items={funk} /></Region>
              </Lane>
              <Lane $h={47}>
                <Region $w={418}><RegionName>Bluebird</RegionName><Dashes w={418} items={blueLead} dim={blueTail} /></Region>
              </Lane>
              <Playhead $x={10} $top={18}><PlayheadCap /></Playhead>
            </Timeline>
          </TimePane>

          <Floating>
            <TitleBar>
              <Light $dot aria-label="閉じる" />
              <Light aria-label="しまう" />
              <Light aria-label="拡大" />
              <Title><DocIcon />プロジェクト ０００</Title>
            </TitleBar>
            <StepBody>
              <Cells $w={26}><Cell aria-label="和音"><NoteGlyph kind="chord" /></Cell></Cells>
              <Cells $w={164}>
                {["n1", "n2", "n4", "n8", "n16", "n32", "n64"].map((k) => (
                  <Cell key={k} $on={k === "n8"} aria-label={k}><NoteGlyph kind={k} /></Cell>
                ))}
              </Cells>
              <Cells $w={69}>
                <Cell aria-label="付点"><NoteGlyph kind="dot" /></Cell>
                <Cell><Triplet>3</Triplet></Cell>
                <Cell aria-label="サステイン"><NoteGlyph kind="tie" /></Cell>
              </Cells>
              <Cells $w={272}>
                {["ppp", "pp", "p", "mp", "mf", "f", "ff", "fff"].map((d) => (
                  <Cell key={d} $on={d === "mf"} $grow={d.length === 3 ? 37 : 33}>
                    <Dynamic $big={d[0] === "f"}>{d}</Dynamic>
                  </Cell>
                ))}
              </Cells>
              <StepSide>
                <SmallButton>Q</SmallButton>
                <ChannelField>
                  <label htmlFor="channel">チャンネル:</label>
                  <SelectBox $w={44} $filled>
                    <select id="channel"><option>1</option></select>
                    <UpDown dim />
                  </SelectBox>
                </ChannelField>
              </StepSide>
            </StepBody>
            <KeyRange>
              <RangePart $grow={244} />
              <RangePart $grow={70} $on />
              <RangePart $grow={286} />
            </KeyRange>
            <Keyboard>
              {whiteKeys.map((k, i) => (
                <WhiteKey key={i} $black={blackOffset[k]} />
              ))}
            </Keyboard>
            <OctaveRow>
              <RangePart $grow={1} />
              {[0, 1, 2, 3, 4, 5, 6, 7].map((o) => (
                <RangePart key={o} $grow={7}>{`C${o}`}</RangePart>
              ))}
              <RangePart $grow={3} />
            </OctaveRow>
          </Floating>
        </Arrange>

        <Divider />
        <Tabs>
          <Spacer />
          <Tab $on>ピアノロール</Tab>
          <Tab>スコア</Tab>
          <Tab $off>ステップシーケンサー</Tab>
          <Tab>スマートテンポ</Tab>
        </Tabs>
        <Toolbar $lower>
          <Group><Menus /></Group>
          <Group $gap={7}><ToolButton $w={32} aria-label="折りたたむ"><CollapseIcon /></ToolButton></Group>
          <Group><ToolButton $w={33} aria-label="オートメーション"><AutomationIcon /></ToolButton></Group>
          <Group>
            <ToolButton $w={32} $tone="red" aria-label="MIDI入力"><MidiIcon /></ToolButton>
            <ToolButton $w={31} $tone="green" aria-label="MIDI出力"><MidiIcon out /></ToolButton>
          </Group>
          <Group $gap={10}><ToolButton $w={31} $tone="blue" aria-label="キャッチ"><CatchIcon /></ToolButton></Group>
          <Group><ToolButton $w={31} $tone="gold" aria-label="リンク"><LinkIcon /></ToolButton></Group>
          <Spacer />
          <Group $gap={0}>
            <ToolMenu aria-label="ポインタツール"><PointerIcon /><Chevron /></ToolMenu>
            <ToolMenu aria-label="鉛筆ツール"><PencilIcon /><Chevron /></ToolMenu>
          </Group>
          <ToolEnd />
        </Toolbar>

        <Editor>
          <EditorLeft>
            <EditorHeader>
              <PianoIcon />
              <EditorTitle>
                Grand Piano and Pad
                <small>トラックGrand Piano and Pad</small>
              </EditorTitle>
              <Group $gap={0}><ToolButton $w={31} aria-label="設定"><PanelIcon /></ToolButton></Group>
            </EditorHeader>
            <EditorSplit>
              <Inspector>
                <Section>
                  <SectionTitle>タイムクオンタイズ（クラシック）</SectionTitle>
                  <Panel>
                    <PanelRow $line>
                      <SelectBox>
                        <select aria-label="タイムクオンタイズ"><option>1/16 -音符</option></select>
                        <UpDown />
                      </SelectBox>
                      <QButton>Q</QButton>
                    </PanelRow>
                    <SliderStack>
                      <SliderRow $h={18}>
                        <SliderName>強さ</SliderName>
                        <Slider type="range" min="0" max="100" defaultValue="100" />
                        <Value>100</Value>
                      </SliderRow>
                      <SliderRow $h={17}>
                        <SliderName>スウィング</SliderName>
                        <Slider type="range" min="0" max="100" defaultValue="0" />
                        <Value>0</Value>
                      </SliderRow>
                    </SliderStack>
                  </Panel>
                </Section>
                <Section>
                  <SectionTitle>スケールクオンタイズ</SectionTitle>
                  <Panel>
                    <PanelRow>
                      <SelectBox $w={77}>
                        <select aria-label="スケールのルート"><option>オフ</option></select>
                        <UpDown />
                      </SelectBox>
                      <Sep />
                      <SelectBox>
                        <select aria-label="スケール"><option>メジャー</option></select>
                        <UpDown />
                      </SelectBox>
                      <QButton>Q</QButton>
                    </PanelRow>
                  </Panel>
                </Section>
                <Section>
                  <SectionTitle id="velocity">ベロシティ</SectionTitle>
                  <Panel>
                    <SliderRow $h={24}>
                      <Slider $lead={8} type="range" min="0" max="127" defaultValue="78" aria-labelledby="velocity" />
                      <Value>78</Value>
                    </SliderRow>
                  </Panel>
                </Section>
              </Inspector>
              <Keys>
                <KeyCol>
                  {[53, 81, 79, 80, 80, 79].map((h, i) => (
                    <VWhite key={i} $h={h}>{i === 0 ? "C3" : ""}</VWhite>
                  ))}
                </KeyCol>
                <KeyCol $narrow>
                  {[5, 94, 46, 47, 46, 47, 46, 93, 46].map((h, i) => (
                    <VBlack key={i} $h={h} $fill={i % 2 === 0} />
                  ))}
                </KeyCol>
              </Keys>
            </EditorSplit>
          </EditorLeft>
          <Gutter $w={9}><StartTriangle /></Gutter>
          <Roll>
            <BeatRuler>
              {["1", "1 2", "1 3"].map((b) => (
                <BeatCell key={b}>{b}</BeatCell>
              ))}
            </BeatRuler>
            <RegionBar>
              <RegionGlyph />
              Grand Piano and Pad
            </RegionBar>
            <NoteGrid>
              {pitchRows.map(([h, kind], i) => (
                <PitchRow key={i} $h={h} $kind={kind} />
              ))}
              <Note $x={-2} $y={361} $c="#6cb33f" />
              <Note $x={182} $y={268} $c="#58b140" />
              <Note $x={366} $y={175} $c="#5ab23f" />
            </NoteGrid>
            <Playhead $x={546} $top={22}><PlayheadCap /></Playhead>
          </Roll>
        </Editor>

        <Annotations width="320" height="640" fill="none" stroke="#ee4fe6" strokeWidth="2.500">
          <circle cx="150.700" cy="93.500" r="23" />
          <path d="M213.500 177.500 175 125" />
          <path d="M170.700 117.700 182 122.700 172.300 129.700z" fill="#ee4fe6" stroke="none" />
          <ellipse cx="286.500" cy="533.500" rx="21" ry="25" />
          <path d="M220 622.500 268 564" />
          <path d="M272.700 558.300 271 571.300 261 564z" fill="#ee4fe6" stroke="none" />
        </Annotations>
      </App>
    </>
  );
}
